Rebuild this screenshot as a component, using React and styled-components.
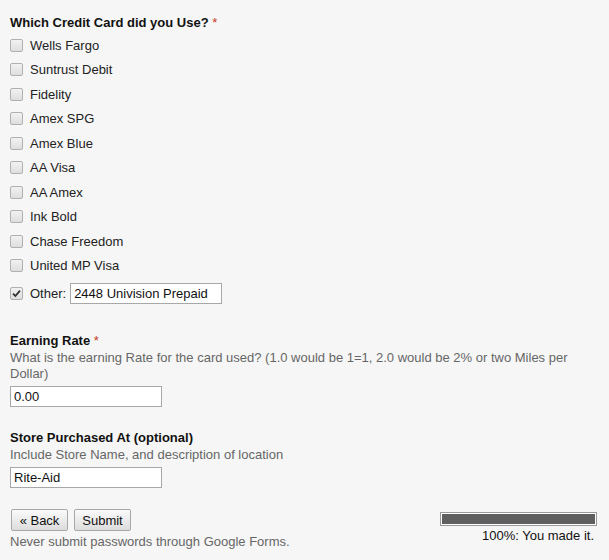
import styled, { createGlobalStyle } from "styled-components";

const GlobalStyle = createGlobalStyle`
  html, body {
    margin: 0;
    background: #f6f6f6;
  }
  body {
    font-family: "Liberation Sans", Arial, sans-serif;
    font-size: 13px;
    color: #222;
  }
`;

const cards = [
  "Wells Fargo",
  "Suntrust Debit",
  "Fidelity",
  "Amex SPG",
  "Amex Blue",
  "AA Visa",
  "AA Amex",
  "Ink Bold",
  "Chase Freedom",
  "United MP Visa",
];

function Check({ checked }) {
  return (
    <Box>
      {checked && (
        <svg width="9" height="9" viewBox="0 0 9 9">
          <path d="M1 4.6 L3.4 7 L8 1.6" fill="none" stroke="#333" strokeWidth="1.8" />
        </svg>
      )}
    </Box>
  );
}

function App() {
  return (
    <Page>
      <GlobalStyle />

      <Title>
        Which Credit Card did you Use? <Star>*</Star>
      </Title>

      <CardList>
        {cards.map((c) => (
          <CardRow key={c}>
            <Check />
            <Label>{c}</Label>
          </CardRow>
        ))}
        <OtherRow>
          <Check checked />
          <Label>Other:</Label>
          <Field $width="152px" defaultValue="2448 Univision Prepaid" />
        </OtherRow>
      </CardList>

      <Question $top="25px">
        <Title>
          Earning Rate <Star>*</Star>
        </Title>
        <Help>
          What is the earning Rate for the card used? (1.0 would be 1=1, 2.0 would be 2% or two Miles per Dollar)
        </Help>
        <Field $width="152px" defaultValue="0.00" />
      </Question>

      <Question $top="23px">
        <Title>Store Purchased At (optional)</Title>
        <Help>Include Store Name, and description of location</Help>
        <Field $width="152px" defaultValue="Rite-Aid" />
      </Question>

      <Footer>
        <div>
          <Buttons>
            <Button>« Back</Button>
            <Button>Submit</Button>
          </Buttons>
          <Note>Never submit passwords through Google Forms.</Note>
        </div>
        <Progress>
          <Bar>
            <Fill />
          </Bar>
          <ProgressText>100%: You made it.</ProgressText>
        </Progress>
      </Footer>
    </Page>
  );
}

export default App;

const Page = styled.div`
  width: 609px;
  height: 560px;
  box-sizing: border-box;
  padding: 15px 12px 0 10px;
  display: flex;
  flex-direction: column;
`;

const Title = styled.div`
  font-weight: bold;
  color: #111;
  line-height: 15px;
  height: 15px;
`;

const Star = styled.span`
  color: #c43b1d;
  font-weight: normal;
`;

const CardList = styled.div`
  margin-top: 3px;
  display: flex;
  flex-direction: column;
`;

const CardRow = styled.div`
  height: 24.5px;
  display: flex;
  align-items: center;
`;

const OtherRow = styled.div`
  height: 30px;
  display: flex;
  align-items: center;
`;

const Box = styled.span`
  width: 11px;
  height: 11px;
  border: 1px solid #b0b0b0;
  border-radius: 2px;
  background: linear-gradient(#f2f2f2, #dedede);
  margin-right: 7px;
  display: flex;
  align-items: center;
  justify-content: center;
`;

const Label = styled.span`
  line-height: 15px;
  margin-right: 4px;
`;

const Field = styled.input`
  width: ${(p) => p.$width};
  height: 21px;
  box-sizing: border-box;
  border: 1px solid #a8a8a8;
  background: #fff;
  padding: 1px 3px;
  font-family: "Liberation Sans", Arial, sans-serif;
  font-size: 13px;
  color: #111;
  outline: none;
`;

const Question = styled.div`
  margin-top: ${(p) => p.$top};
  display: flex;
  flex-direction: column;
  align-items: flex-start;
`;

const Help = styled.div`
  color: #666;
  line-height: 16px;
  margin: 2px 0 4px;
`;

const Footer = styled.div`
  margin-top: 21px;
  display: flex;
  justify-content: space-between;
`;

const Buttons = styled.div`
  display: flex;
  gap: 6px;
  margin-left: 1px;
`;

const Button = styled.button`
  height: 22px;
  min-width: 57px;
  padding: 0 7px;
  border: 1px solid #a8a8a8;
  border-radius: 2px;
  background: linear-gradient(#fafafa, #dcdcdc);
  font-family: "Liberation Sans", Arial, sans-serif;
  font-size: 13px;
  color: #111;
`;

const Note = styled.div`
  color: #666;
  line-height: 15px;
  margin-top: 3px;
`;

const Progress = styled.div`
  display: flex;
  flex-direction: column;
  align-items: flex-end;
  padding-top: 3px;
`;

const Bar = styled.div`
  width: 157px;
  height: 14px;
  box-sizing: border-box;
  border: 1px solid #999;
  background: #fff;
  padding: 1px;
`;

const Fill = styled.div`
  height: 100%;
  background: #5f5f5f;
`;

const ProgressText = styled.div`
  line-height: 15px;
  margin: 2px 3px 0 0;
  color: #111;
`;
